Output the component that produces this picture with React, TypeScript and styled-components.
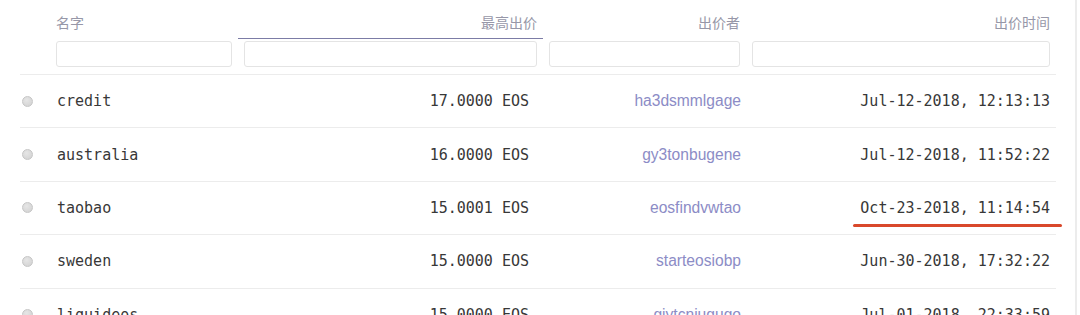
import styled, { createGlobalStyle } from "styled-components";

const GlobalStyle = createGlobalStyle`
  html, body {
    margin: 0;
    padding: 0;
    background: #ffffff;
  }
  body {
    font-family: "Liberation Sans", "Noto Sans CJK SC", sans-serif;
    overflow: hidden;
  }
`;

const Page = styled.div`
  box-sizing: border-box;
  width: 1077px;
  height: 315px;
  padding-left: 20px;
  border-right: 2px solid #ececec;
  overflow: hidden;
`;

const Table = styled.div`
  width: 1036px;
  display: grid;
  grid-template-columns: 30px 188px 305px 203px 310px;
`;

const HeaderCell = styled.div`
  display: flex;
  flex-direction: column;
  padding: 12px 0 7px;
  border-bottom: 1px solid #ececec;
`;

const Label = styled.div<{ $active?: boolean; $align?: string }>`
  height: 20px;
  line-height: 20px;
  padding: 0 6px 6px;
  font-family: "Noto Sans CJK SC", sans-serif;
  font-size: 14px;
  color: #9797a8;
  text-align: ${(p) => p.$align || "left"};
  border-bottom: 1px solid ${(p) => (p.$active ? "#7c7ca6" : "transparent")};
`;

const FilterWrap = styled.div`
  padding: 2px 6px 0;
`;

const FilterInput = styled.input`
  display: block;
  box-sizing: border-box;
  width: 100%;
  height: 26px;
  border: 1px solid #e4e4e4;
  border-radius: 3px;
  background: #ffffff;
  outline: none;
`;

const Cell = styled.div<{ $align?: string; $padRight?: number; $padLeft?: number }>`
  position: relative;
  height: 52.4px;
  display: flex;
  align-items: center;
  justify-content: ${(p) => (p.$align === "right" ? "flex-end" : "flex-start")};
  padding: 0 ${(p) => p.$padRight ?? 6}px 0 ${(p) => p.$padLeft ?? 7}px;
  border-bottom: 1px solid #ececec;
  white-space: nowrap;
`;

const Radio = styled.span`
  box-sizing: border-box;
  width: 11px;
  height: 11px;
  border-radius: 50%;
  border: 1px solid #c6c6c6;
  background: radial-gradient(circle at 40% 35%, #e6e6e6, #d0d0d0);
`;

const Mono = styled.span`
  font-family: "DejaVu Sans Mono", "Liberation Mono", monospace;
  font-size: 15px;
  color: #383838;
`;

const Bidder = styled.a`
  font-family: "Liberation Sans", sans-serif;
  font-size: 15.6px;
  color: #8c8cc6;
  text-decoration: none;
`;

const Mark = styled.span`
  position: absolute;
  right: -6px;
  top: 42px;
  width: 209px;
  height: 3px;
  border-radius: 2px;
  background: #d9482b;
`;

type Bid = {
  name: string;
  price: string;
  bidder: string;
  time: string;
  marked?: boolean;
};

const bids: Bid[] = [
  { name: "credit", price: "17.0000 EOS", bidder: "ha3dsmmlgage", time: "Jul-12-2018, 12:13:13" },
  { name: "australia", price: "16.0000 EOS", bidder: "gy3tonbugene", time: "Jul-12-2018, 11:52:22" },
  { name: "taobao", price: "15.0001 EOS", bidder: "eosfindvwtao", time: "Oct-23-2018, 11:14:54", marked: true },
  { name: "sweden", price: "15.0000 EOS", bidder: "starteosiobp", time: "Jun-30-2018, 17:32:22" },
  { name: "liquideos", price: "15.0000 EOS", bidder: "giytcniugugo", time: "Jul-01-2018, 22:33:59" },
];

const columns = [
  { label: "名字", align: "left" },
  { label: "最高出价", align: "right", active: true },
  { label: "出价者", align: "right" },
  { label: "出价时间", align: "right" },
];

const App = () => {
  return (
    <>
      <GlobalStyle />
      <Page>
        <Table>
          <HeaderCell />
          {columns.map((col) => (
            <HeaderCell key={col.label}>
              <Label $align={col.align} $active={col.active}>{col.label}</Label>
              <FilterWrap>
                <FilterInput type="text" />
              </FilterWrap>
            </HeaderCell>
          ))}

          {bids.map((bid) => (
            <>
              <Cell key={bid.name + "-r"} $padLeft={2}>
                <Radio />
              </Cell>
              <Cell key={bid.name + "-n"}>
                <Mono>{bid.name}</Mono>
              </Cell>
              <Cell key={bid.name + "-p"} $align="right" $padRight={14}>
                <Mono>{bid.price}</Mono>
              </Cell>
              <Cell key={bid.name + "-b"} $align="right" $padRight={5}>
                <Bidder href="#">{bid.bidder}</Bidder>
              </Cell>
              <Cell key={bid.name + "-t"} $align="right">
                <Mono>{bid.time}</Mono>
                {bid.marked && <Mark />}
              </Cell>
            </>
          ))}
        </Table>
      </Page>
    </>
  );
};

export default App;
